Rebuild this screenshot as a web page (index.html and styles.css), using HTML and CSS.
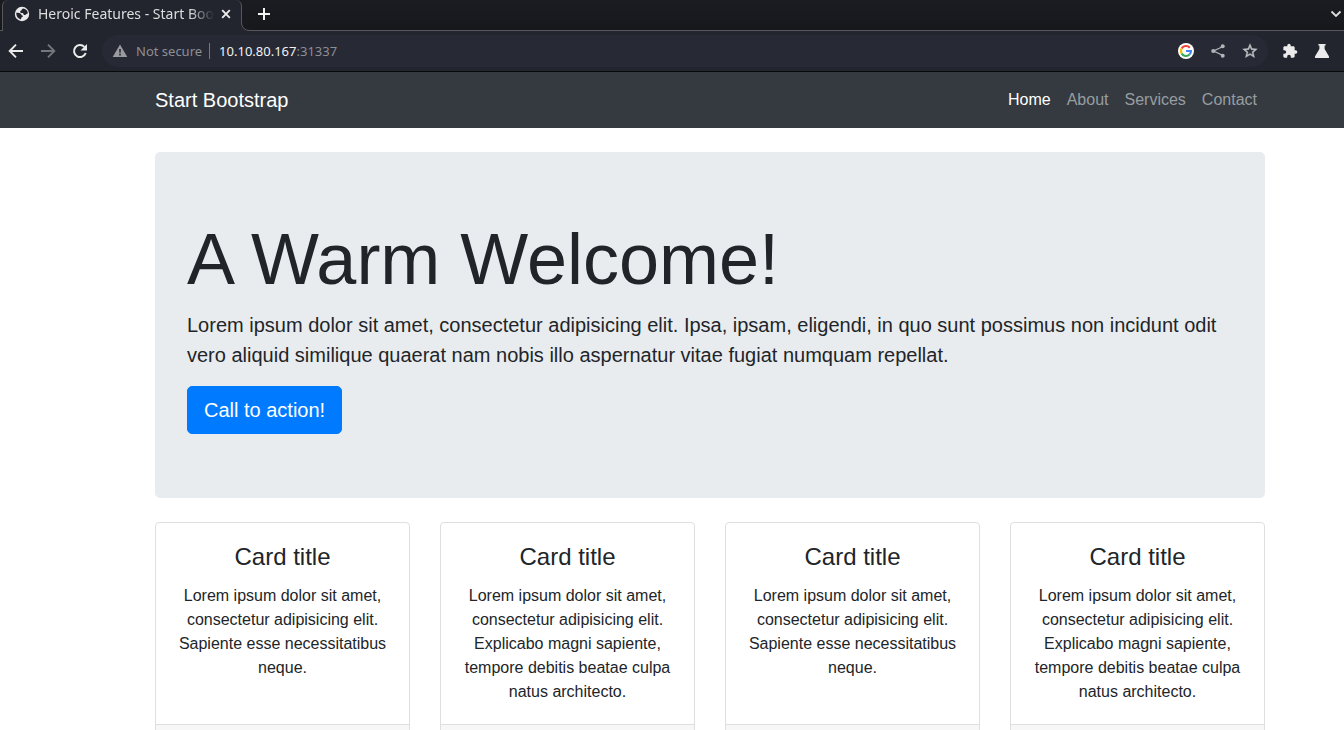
FILE: index.html
```html
<!DOCTYPE html>
<html lang="en">
<head>
<meta charset="utf-8">
<title>Heroic Features - Start Bootstrap</title>
<link rel="stylesheet" href="styles.css">
</head>
<body>
<div class="browser">
  <div class="tabstrip">
    <div class="tab">
      <svg class="icon" viewBox="0 0 16 16" aria-hidden="true"><circle cx="8" cy="8" r="7.200" fill="#ebebeb"/><path d="M9.600 2.600C8.200 2.800 7.600 3.400 7.800 4.300 6.500 4.600 6 5.300 6.300 6.300c.3.800 1.200.7 2.100.8.900.2 1 .9 1.300 1.600.9.600 2.200.3 2.800-.6.4-.600.900-.700 1.400-.500C13.800 5.100 12.200 3.200 9.600 2.600zM2.300 6.800c1.700-.100 3.500.100 4.400 1 .8.700.6 1.500 1.600 1.700.9.300.7 1.200-.1 1.600-.8.400-1.200 1.200-1.200 2.300-2.800-.500-4.900-3.200-4.700-6.600z" fill="#22252e"/></svg>
      <span class="tab-title">Heroic Features - Start Boo</span>
      <button class="tab-button" aria-label="Close tab"><svg class="icon" viewBox="0 0 16 16"><path d="M4.200 4.200l7.600 7.600M11.800 4.200l-7.600 7.600" stroke="#ebebeb" stroke-width="1.900"/></svg></button>
      <svg class="tab-foot" viewBox="0 0 9 9" aria-hidden="true"><path d="M0 0h.5Q.5 8.500 9 8.500V9H0z" fill="#22252e"/><path d="M.5 0Q.5 8.500 9 8.500" fill="none" stroke="#56575b"/></svg>
    </div>
    <button class="tab-button new-tab" aria-label="New tab"><svg class="icon" viewBox="0 0 16 16"><path d="M8 2v12M2 8h12" stroke="#f2f2f2" stroke-width="2"/></svg></button>
    <button class="tab-button" aria-label="Search tabs"><svg class="icon" viewBox="0 0 16 16"><path d="M3.500 5.500L8 10l4.500-4.500" fill="none" stroke="#dedede" stroke-width="1.800"/></svg></button>
  </div>
  <div class="toolbar">
    <div class="nav-buttons">
      <button class="tool" aria-label="Back"><svg class="icon" viewBox="0 0 16 16"><path d="M15 8H2.500M8 1.700L1.700 8 8 14.300" fill="none" stroke="#ebebeb" stroke-width="1.900"/></svg></button>
      <button class="tool" aria-label="Forward"><svg class="icon" viewBox="0 0 16 16"><path d="M1 8h12.500M8 1.700L14.300 8 8 14.300" fill="none" stroke="#74767b" stroke-width="1.900"/></svg></button>
      <button class="tool" aria-label="Reload"><svg class="icon" viewBox="0 0 16 16"><path d="M13.700 10A6 6 0 1 1 12.400 3.900" fill="none" stroke="#ebebeb" stroke-width="2"/><path d="M15 1v6.500H8.500z" fill="#ebebeb"/></svg></button>
    </div>
    <div class="omnibox">
      <svg class="icon" viewBox="0 0 16 16" aria-hidden="true"><path d="M8 1.500L15.300 14H.7z" fill="#9a9ba0"/><path d="M8 6v3.600M8 10.600v1.800" stroke="#272935" stroke-width="1.600"/></svg>
      <span class="security">Not secure</span>
      <span class="address"><span class="host">10.10.80.167</span>:31337</span>
      <button class="tool" aria-label="Google"><svg class="icon" viewBox="0 0 16 16"><circle cx="8" cy="8" r="8" fill="#fff"/><g fill="none" stroke-width="2.100"><path d="M3.700 5.400A5 5 0 0 1 11.800 4.700" stroke="#ea4335"/><path d="M3.700 10.600a5 5 0 0 1 0-5.200" stroke="#fbbc05"/><path d="M11.500 11.500a5 5 0 0 1-7.800-.9" stroke="#34a853"/><path d="M8 8h5a5 5 0 0 1-1.500 3.500" stroke="#4285f4"/></g></svg></button>
      <button class="tool" aria-label="Share"><svg class="icon" viewBox="0 0 16 16"><path d="M13 3.500L3.500 8l9.500 4.500" fill="none" stroke="#b3b4b8" stroke-width="1.300"/><g fill="#b3b4b8"><circle cx="12.700" cy="3.300" r="2"/><circle cx="3.300" cy="8" r="2.100"/><circle cx="12.700" cy="12.700" r="2"/></g></svg></button>
      <button class="tool" aria-label="Bookmark this page"><svg class="icon" viewBox="1 1 22 22"><path d="M22 9.240l-7.190-.62L12 2 9.190 8.630 2 9.240l5.460 4.730L5.820 21 12 17.270 18.180 21l-1.630-7.030L22 9.240zM12 15.400l-3.760 2.270 1-4.280-3.320-2.880 4.380-.38L12 6.100l1.710 4.040 4.380.38-3.320 2.880 1 4.280L12 15.400z" fill="#bfc0c3" stroke="#bfc0c3" stroke-width=".6"/></svg></button>
    </div>
    <div class="extensions">
      <button class="tool" aria-label="Extensions"><svg class="icon" viewBox="0 0 24 24"><path d="M20.500 11H19V7c0-1.100-.9-2-2-2h-4V3.500a2.500 2.500 0 0 0-5 0V5H4c-1.100 0-1.990.9-1.990 2v3.800H3.500c1.490 0 2.700 1.210 2.700 2.700s-1.210 2.700-2.700 2.700H2V20c0 1.100.9 2 2 2h3.800v-1.500c0-1.490 1.210-2.700 2.700-2.700s2.700 1.210 2.700 2.700V22H17c1.100 0 2-.9 2-2v-4h1.500a2.500 2.500 0 0 0 0-5z" fill="#ebebeb"/></svg></button>
      <button class="tool" aria-label="Labs"><svg class="icon" viewBox="0 0 16 16"><path d="M4.400 1h7.200v1.600h-1V6l4.300 7.200c.5.900.1 1.800-.9 1.800H2c-1 0-1.400-.9-.9-1.800L5.400 6V2.600h-1z" fill="#ebebeb"/></svg></button>
    </div>
  </div>

  <div class="page">
    <nav class="navbar gutters">
      <a class="brand" href="#">Start Bootstrap</a>
      <ul class="menu">
        <li><a class="menu-link active" href="#">Home</a></li>
        <li><a class="menu-link" href="#">About</a></li>
        <li><a class="menu-link" href="#">Services</a></li>
        <li><a class="menu-link" href="#">Contact</a></li>
      </ul>
    </nav>
    <main class="content gutters">
      <header class="jumbotron">
        <h1 class="headline">A Warm Welcome!</h1>
        <p class="lead">Lorem ipsum dolor sit amet, consectetur adipisicing elit. Ipsa, ipsam, eligendi, in quo sunt possimus non incidunt odit vero aliquid similique quaerat nam nobis illo aspernatur vitae fugiat numquam repellat.</p>
        <a class="cta" href="#">Call to action!</a>
      </header>
      <div class="cards">
        <article class="card">
          <div class="card-body"><h2 class="card-title">Card title</h2>
          <p class="card-text">Lorem ipsum dolor sit amet, consectetur adipisicing elit. Sapiente esse necessitatibus neque.</p></div>
          <div class="card-footer"></div>
        </article>
        <article class="card">
          <div class="card-body"><h2 class="card-title">Card title</h2>
          <p class="card-text">Lorem ipsum dolor sit amet, consectetur adipisicing elit. Explicabo magni sapiente, tempore debitis beatae culpa natus architecto.</p></div>
          <div class="card-footer"></div>
        </article>
        <article class="card">
          <div class="card-body"><h2 class="card-title">Card title</h2>
          <p class="card-text">Lorem ipsum dolor sit amet, consectetur adipisicing elit. Sapiente esse necessitatibus neque.</p></div>
          <div class="card-footer"></div>
        </article>
        <article class="card">
          <div class="card-body"><h2 class="card-title">Card title</h2>
          <p class="card-text">Lorem ipsum dolor sit amet, consectetur adipisicing elit. Explicabo magni sapiente, tempore debitis beatae culpa natus architecto.</p></div>
          <div class="card-footer"></div>
        </article>
      </div>
    </main>
  </div>
</div>
</body>
</html>
```
FILE: styles.css
```css
* { box-sizing: border-box; }
body {
  margin: 0;
  font-family: "Liberation Sans", Arial, sans-serif;
  font-size: 16px;
  line-height: 24px;
  color: #212529;
  background: #fff;
}
h1, h2, p, ul { margin: 0; padding: 0; font-weight: 400; }
a { text-decoration: none; }
button { border: 0; padding: 0; background: none; font: inherit; }
.icon { display: block; flex: none; width: 16px; height: 16px; }

/* Browser window */
.browser {
  display: flex;
  flex-direction: column;
  height: 100vh;
  overflow: hidden;
  font-family: "Noto Sans", sans-serif;
}
.tabstrip {
  display: flex;
  flex: none;
  height: 31px;
  padding-left: 2px;
  background: linear-gradient(#1b1c21, #17181c);
  border-bottom: 1px solid #56575b;
}
.tab {
  position: relative;
  display: flex;
  align-items: center;
  width: 240px;
  height: 31px;
  padding: 0 7px 3px 11px;
  background: #22252e;
  border: 1px solid #56575b;
  border-width: 0 1px;
  border-radius: 6px 6px 0 0;
}
.tab-foot {
  position: absolute;
  left: 100%;
  bottom: 0;
  width: 9px;
  height: 9px;
}
.tab-title {
  flex: 1;
  margin-left: 8px;
  overflow: hidden;
  white-space: nowrap;
  font-size: 14px;
  color: #dedede;
  -webkit-mask-image: linear-gradient(to right, #000 84%, transparent 98%);
  mask-image: linear-gradient(to right, #000 84%, transparent 98%);
}
.tab-button { display: flex; align-items: center; justify-content: center; }
.tabstrip > .tab-button { height: 28px; }
.new-tab { margin: 0 auto 0 14px; }
.toolbar {
  display: flex;
  flex: none;
  align-items: center;
  height: 41px;
  background: #22252e;
  border-bottom: 1px solid #08090b;
}
.tool {
  display: flex;
  align-items: center;
  justify-content: center;
  width: 32px;
  height: 32px;
}
.nav-buttons { display: flex; padding-right: 6px; }
.extensions { display: flex; padding: 0 6px; }
.omnibox {
  display: flex;
  flex: 1;
  align-items: center;
  height: 32px;
  padding: 0 2px 0 10px;
  border-radius: 16px;
  background: #272935;
  font-size: 13px;
  color: #8d8f95;
}
.security { margin-left: 8px; padding-right: 7px; border-right: 1px solid #777980; line-height: 16px; }
.address { flex: 1; padding-left: 9px; }
.host { color: #f2f2f2; }

/* Web page */
.page {
  flex: 1;
  min-height: 0;
  overflow: hidden;
  font-family: "Liberation Sans", Arial, sans-serif;
}
.gutters { padding-left: 155px; padding-right: 79px; }
.navbar {
  display: flex;
  align-items: center;
  justify-content: space-between;
  height: 56px;
  background: #343a40;
}
.brand { font-size: 20px; line-height: 30px; color: #fff; }
.menu { display: flex; list-style: none; }
.menu-link { display: block; padding: 8px; color: #999da0; }
.menu-link.active { color: #fff; }
.content { padding-top: 24px; }
.jumbotron {
  margin-bottom: 24px;
  padding: 64px 32px;
  border-radius: 5px;
  background: #e9ecef;
}
.headline { margin-bottom: 8px; font-size: 72px; line-height: 86px; }
.lead { margin-bottom: 16px; font-size: 20px; line-height: 30px; }
.cta {
  display: block;
  width: fit-content;
  padding: 8px 16px;
  border: 1px solid #007bff;
  border-radius: 5px;
  background: #007bff;
  font-size: 20px;
  line-height: 30px;
  color: #fff;
}
.cards { display: grid; grid-template-columns: repeat(4, 1fr); gap: 30px; text-align: center; }
.card {
  display: flex;
  flex-direction: column;
  border: 1px solid #dfdfdf;
  border-radius: 4px;
  overflow: hidden;
}
.card-body { flex: 1; padding: 20px; }
.card-title { margin-bottom: 13px; font-size: 24px; line-height: 28px; }
.card-footer { height: 63px; border-top: 1px solid #dfdfdf; background: #f7f7f7; }
```
